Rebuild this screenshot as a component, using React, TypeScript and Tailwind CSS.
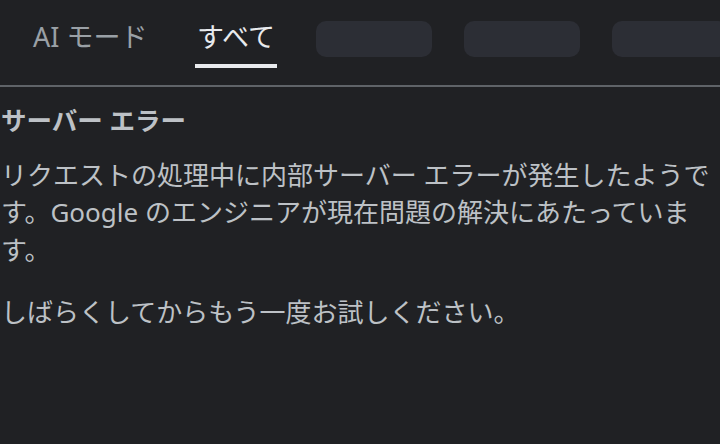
const pills = ["a", "b", "c"];

const App = () => {
  return (
    <div className="h-[444px] w-[720px] overflow-hidden bg-[#202124] font-['Noto_Sans','Noto_Sans_CJK_JP',sans-serif]">
      <nav className="flex h-[87px] items-start border-b-2 border-[#5f6368] pl-[33px]">
        <div className="w-[162px] shrink-0 pt-[19px] text-[27px] leading-[36px] text-[#9aa0a6]">AI モード</div>
        <div className="flex w-[82px] shrink-0 flex-col items-center pt-[19px]">
          <span className="text-[27px] leading-[36px] text-[#e8eaed]">すべて</span>
          <span className="mt-[9px] h-[4px] w-full bg-[#e8eaed]" />
        </div>
        <div className="ml-[39px] mt-[21px] flex shrink-0 gap-8">
          {pills.map((p) => (
            <div key={p} className="h-[36px] w-[116px] shrink-0 rounded-[10px] bg-[#2c2e35]" />
          ))}
        </div>
      </nav>
      <main className="pl-[1px] pt-[15px] text-[26px] leading-[37.5px] text-[#bdc1c6]">
        <h1 className="text-[25.5px] font-bold">サーバー エラー</h1>
        <p className="mt-[17px]">
          リクエストの処理中に内部サーバー エラーが発生したようです。Google のエンジニアが現在問題の解決にあたっています。
        </p>
        <p className="mt-[25px]">しばらくしてからもう一度お試しください。</p>
      </main>
    </div>
  );
};

export default App;
